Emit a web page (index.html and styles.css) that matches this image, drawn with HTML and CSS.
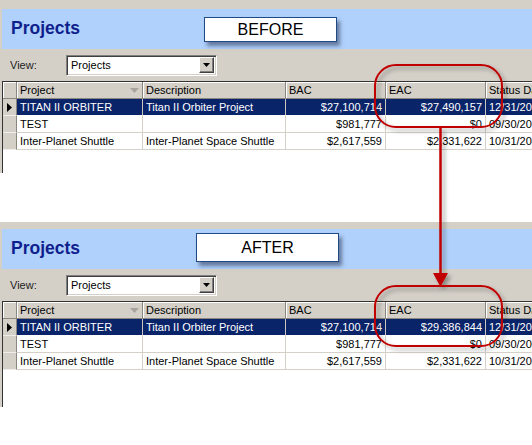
FILE: index.html
```html
<!DOCTYPE html>
<html>
<head>
<meta charset="utf-8">
<title>Projects – Before / After</title>
<link rel="stylesheet" href="styles.css">
</head>
<body>
<div class="page">

  <section class="panel panel-before">
    <div class="band">
      <h1 class="title">Projects</h1>
      <div class="tag tag-before">BEFORE</div>
    </div>
    <div class="viewrow">
      <span class="view-label">View:</span>
      <div class="combo">
        <span class="combo-text">Projects</span>
        <span class="combo-btn"><svg width="7" height="4" viewBox="0 0 7 4"><polygon points="0,0 7,0 3.5,4" fill="#000"/></svg></span>
      </div>
    </div>
    <div class="grid">
      <div class="row head">
        <div class="c rh"></div>
        <div class="c hc">Project<svg class="sort" width="9" height="5" viewBox="0 0 9 5"><polygon points="0,0 9,0 4.5,5" fill="#a7a49d"/></svg></div>
        <div class="c hc">Description</div>
        <div class="c hc">BAC</div>
        <div class="c hc">EAC</div>
        <div class="c hc">Status Date</div>
      </div>
      <div class="row sel">
        <div class="c rh"><svg width="5" height="9" viewBox="0 0 5 9"><polygon points="0,0 5,4.5 0,9" fill="#000"/></svg></div>
        <div class="c">TITAN II ORBITER</div>
        <div class="c">Titan II Orbiter Project</div>
        <div class="c num">$27,100,714</div>
        <div class="c num">$27,490,157</div>
        <div class="c">12/31/2009</div>
      </div>
      <div class="row">
        <div class="c rh"></div>
        <div class="c">TEST</div>
        <div class="c"></div>
        <div class="c num">$981,777</div>
        <div class="c num">$0</div>
        <div class="c">09/30/2009</div>
      </div>
      <div class="row">
        <div class="c rh"></div>
        <div class="c">Inter-Planet Shuttle</div>
        <div class="c">Inter-Planet Space Shuttle</div>
        <div class="c num">$2,617,559</div>
        <div class="c num">$2,331,622</div>
        <div class="c">10/31/2009</div>
      </div>
    </div>
  </section>

  <section class="panel panel-after">
    <div class="band">
      <h1 class="title">Projects</h1>
      <div class="tag tag-after">AFTER</div>
    </div>
    <div class="viewrow">
      <span class="view-label">View:</span>
      <div class="combo">
        <span class="combo-text">Projects</span>
        <span class="combo-btn"><svg width="7" height="4" viewBox="0 0 7 4"><polygon points="0,0 7,0 3.5,4" fill="#000"/></svg></span>
      </div>
    </div>
    <div class="grid">
      <div class="row head">
        <div class="c rh"></div>
        <div class="c hc">Project<svg class="sort" width="9" height="5" viewBox="0 0 9 5"><polygon points="0,0 9,0 4.5,5" fill="#a7a49d"/></svg></div>
        <div class="c hc">Description</div>
        <div class="c hc">BAC</div>
        <div class="c hc">EAC</div>
        <div class="c hc">Status Date</div>
      </div>
      <div class="row sel">
        <div class="c rh"><svg width="5" height="9" viewBox="0 0 5 9"><polygon points="0,0 5,4.5 0,9" fill="#000"/></svg></div>
        <div class="c">TITAN II ORBITER</div>
        <div class="c">Titan II Orbiter Project</div>
        <div class="c num">$27,100,714</div>
        <div class="c num">$29,386,844</div>
        <div class="c">12/31/2009</div>
      </div>
      <div class="row">
        <div class="c rh"></div>
        <div class="c">TEST</div>
        <div class="c"></div>
        <div class="c num">$981,777</div>
        <div class="c num">$0</div>
        <div class="c">09/30/2009</div>
      </div>
      <div class="row">
        <div class="c rh"></div>
        <div class="c">Inter-Planet Shuttle</div>
        <div class="c">Inter-Planet Space Shuttle</div>
        <div class="c num">$2,617,559</div>
        <div class="c num">$2,331,622</div>
        <div class="c">10/31/2009</div>
      </div>
    </div>
  </section>

  <svg class="annot" width="532" height="445" viewBox="0 0 532 445">
    <defs>
      <filter id="sh" x="-20%" y="-20%" width="140%" height="140%">
        <feDropShadow dx="3" dy="3" stdDeviation="2" flood-color="#000" flood-opacity="0.35"/>
      </filter>
    </defs>
    <g filter="url(#sh)" fill="none" stroke="#c00000" stroke-width="2">
      <rect x="375" y="65" width="127" height="62" rx="21" ry="21"/>
      <rect x="375" y="286" width="127" height="60" rx="21" ry="21"/>
      <line x1="440.5" y1="128" x2="440.5" y2="275" stroke-width="2.5"/>
      <polygon points="433,273 448,273 440.5,287" fill="#c00000" stroke="none"/>
    </g>
  </svg>

</div>
</body>
</html>
```

FILE: styles.css
```css
* {
  box-sizing: border-box;
  margin: 0;
  padding: 0;
}

html, body {
  background: #fff;
}

body {
  width: 532px;
  height: 445px;
  overflow: hidden;
  font-family: "Liberation Sans", Arial, sans-serif;
}

.page {
  position: relative;
  width: 532px;
  height: 445px;
  overflow: hidden;
}

/* ---------- panel ---------- */
.panel {
  background: #d4d0c8;
  padding-left: 2px;
  overflow: hidden;
}

.panel-before {
  padding-top: 9px;
  margin-bottom: 49px;
}

.panel-after {
  padding-top: 7px;
}

.band {
  display: flex;
  align-items: flex-start;
  height: 40px;
  background: #b0d1fb;
  padding-left: 9px;
}

.title {
  flex: none;
  font-size: 17.5px;
  font-weight: bold;
  color: #0f1f8e;
  line-height: 38px;
}

.panel-before .title { width: 193px; }
.panel-after .title { width: 185px; }

.tag {
  display: flex;
  align-items: center;
  justify-content: center;
  background: #fff;
  border: 1px solid #1f4a86;
  box-shadow: 3px 4px 4px rgba(40, 50, 80, 0.55);
  font-size: 16px;
  color: #000;
}

.tag-before {
  width: 133px;
  height: 25px;
  margin-top: 8px;
}

.tag-after {
  width: 143px;
  height: 29px;
  margin-top: 4px;
}

/* ---------- view row ---------- */
.viewrow {
  display: flex;
  align-items: center;
  height: 32px;
  padding-left: 8px;
}

.view-label {
  width: 56px;
  font-size: 11px;
  color: #222;
}

.combo {
  display: flex;
  align-items: center;
  width: 151px;
  height: 21px;
  background: #fff;
  border: 1px solid;
  border-color: #808080 #fff #fff #808080;
  box-shadow: inset 1px 1px 0 #404040, inset -1px -1px 0 #d4d0c8;
  padding: 2px 2px 2px 4px;
}

.combo-text {
  flex: 1;
  font-size: 11px;
  color: #000;
}

.combo-btn {
  display: flex;
  align-items: center;
  justify-content: center;
  width: 15px;
  height: 16px;
  background: #d4d0c8;
  border: 1px solid;
  border-color: #fff #404040 #404040 #fff;
  box-shadow: inset -1px -1px 0 #808080;
}

/* ---------- grid ---------- */
.grid {
  background: #fff;
  border-left: 1px solid #333;
  border-top: 1px solid #333;
  font-size: 11px;
  overflow: hidden;
}

.panel-before .grid { height: 92px; }
.panel-after .grid { height: 106px; }

.row {
  display: grid;
  grid-template-columns: 14px 126px 143px 100px 100px 80px;
  height: 17px;
}

.c {
  border-right: 1px solid #d4d0c8;
  border-bottom: 1px solid #d4d0c8;
  padding: 0 3px;
  line-height: 16px;
  white-space: nowrap;
  overflow: hidden;
  color: #000;
}

.num {
  text-align: right;
}

.head .c {
  background: #d4d0c8;
  border-right-color: #8a8780;
  border-bottom-color: #8a8780;
  box-shadow: inset 1px 1px 0 #fff;
}

.hc {
  display: flex;
  align-items: center;
  justify-content: space-between;
}

.sort {
  flex: none;
  margin-right: 0;
}

.rh {
  display: flex;
  align-items: center;
  padding-left: 4px;
  background: #d4d0c8;
  border-right-color: #8a8780;
  border-bottom-color: #eeede9;
}

.sel .c:not(.rh) {
  background: #0a246a;
  color: #fff;
  border-right-color: #c9c7c0;
  border-bottom-color: #fff;
}

/* ---------- annotations ---------- */
.annot {
  position: absolute;
  left: 0;
  top: 0;
  pointer-events: none;
}
```
